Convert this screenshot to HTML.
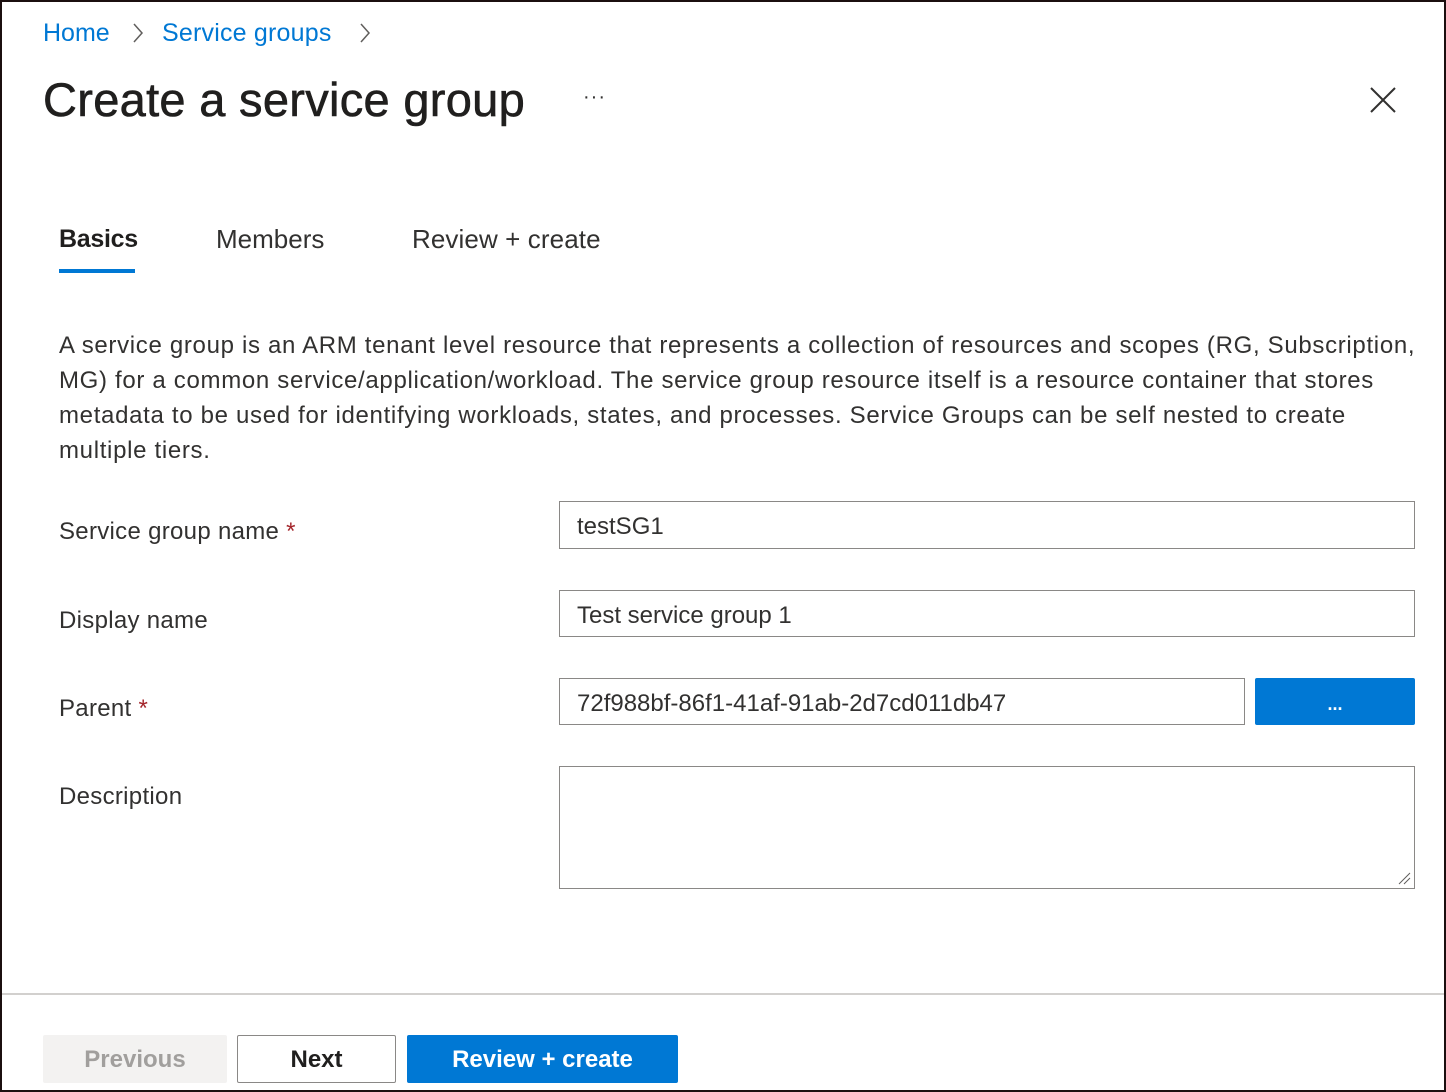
<!DOCTYPE html>
<html><head><meta charset="utf-8"><style>
*{box-sizing:border-box;margin:0;padding:0}
html,body{width:1446px;height:1092px;overflow:hidden;background:#fff}
body{font-family:"Liberation Sans",sans-serif;color:#323130;position:relative}
.frame{position:absolute;left:0;top:0;width:1446px;height:1092px;border:2px solid #1b0f0f;z-index:5;pointer-events:none}
.a{position:absolute;white-space:nowrap}
.bc{color:#0078d4;font-size:25px;top:19px}
.chev{top:22px}
h1{position:absolute;left:43px;top:72px;font-size:47px;font-weight:normal;color:#201f1e;letter-spacing:0.3px;-webkit-text-stroke:0.6px #201f1e;white-space:nowrap}
.tab{top:224px;font-size:26px;color:#323130}
.desc{left:59px;top:328px;font-size:24px;line-height:35px;color:#323130;letter-spacing:0.68px}
.lbl{left:59px;font-size:24px;color:#323130;letter-spacing:0.3px}
.req{color:#a4262c}
.inp{position:absolute;left:559px;width:856px;border:1px solid #8a8886;font-size:24px;padding-left:17px;color:#323130}
.btn{position:absolute;top:1035px;height:48px;font-size:24px;text-align:center;line-height:50px;border-radius:2px;font-weight:bold}
</style></head><body>
<div class="frame"></div>
<div class="a bc" style="left:43px">Home</div>
<svg class="a chev" style="left:131px" width="14" height="22"><path d="M3 2 L11 11 L3 20" fill="none" stroke="#605e5c" stroke-width="1.5"/></svg>
<div class="a bc" style="left:162px;letter-spacing:0.2px">Service groups</div>
<svg class="a chev" style="left:358px" width="14" height="22"><path d="M3 2 L11 11 L3 20" fill="none" stroke="#605e5c" stroke-width="1.5"/></svg>
<h1>Create a service group</h1>
<div class="a" style="left:583px;top:86px;font-size:20px;color:#323130;letter-spacing:1px">···</div>
<svg class="a" style="left:1370px;top:87px" width="26" height="26"><path d="M1 1 L25 25 M25 1 L1 25" stroke="#323130" stroke-width="2"/></svg>
<div class="a tab" style="left:59px;font-weight:bold;color:#201f1e;font-size:25px;top:225px;letter-spacing:-0.3px">Basics</div>
<div style="position:absolute;left:59px;top:269px;width:76px;height:4px;background:#0078d4"></div>
<div class="a tab" style="left:216px">Members</div>
<div class="a tab" style="left:412px;letter-spacing:0.1px">Review + create</div>
<div class="a desc">A service group is an ARM tenant level resource that represents a collection of resources and scopes (RG, Subscription,<br>MG) for a common service/application/workload. The service group resource itself is a resource container that stores<br>metadata to be used for identifying workloads, states, and processes. Service Groups can be self nested to create<br>multiple tiers.</div>
<div class="a lbl" style="top:518px">Service group name <span class="req">*</span></div>
<div class="inp" style="top:501px;height:48px;line-height:50px">testSG1</div>
<div class="a lbl" style="top:607px">Display name</div>
<div class="inp" style="top:590px;height:47px;line-height:49px">Test service group 1</div>
<div class="a lbl" style="top:695px">Parent <span class="req">*</span></div>
<div class="inp" style="top:678px;height:47px;line-height:49px;width:686px">72f988bf-86f1-41af-91ab-2d7cd011db47</div>
<div style="position:absolute;left:1255px;top:678px;width:160px;height:47px;background:#0078d4;border-radius:2px;color:#fff;text-align:center;font-weight:bold;font-size:18px;line-height:52px">...</div>
<div class="a lbl" style="top:783px">Description</div>
<div class="inp" style="top:766px;height:123px"></div>
<svg class="a" style="left:1397px;top:871px" width="14" height="14"><path d="M13 2 L2 13 M13 7 L7 13" stroke="#605e5c" stroke-width="1"/></svg>
<div style="position:absolute;left:0;top:993px;width:1446px;height:2px;background:#d2d0ce"></div>
<div class="btn" style="left:43px;width:184px;background:#f3f2f1;color:#a19f9d">Previous</div>
<div class="btn" style="left:237px;width:159px;border:1px solid #8a8886;color:#201f1e;line-height:48px">Next</div>
<div class="btn" style="left:407px;width:271px;background:#0078d4;color:#fff">Review + create</div>
</body></html>
